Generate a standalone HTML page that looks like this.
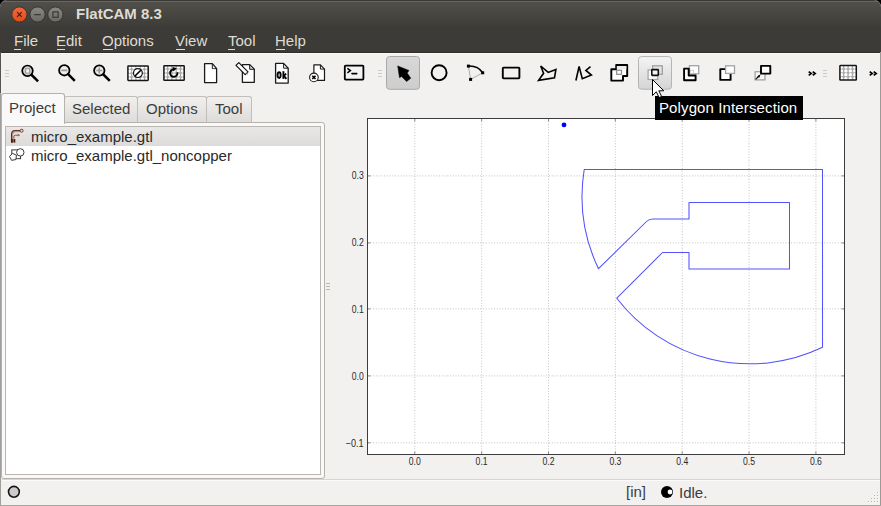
<!DOCTYPE html>
<html><head><meta charset="utf-8">
<style>
*{margin:0;padding:0;box-sizing:border-box}
html,body{width:881px;height:506px;overflow:hidden;background:#000}
body{font-family:"Liberation Sans",sans-serif;position:relative}
.a{position:absolute}
.t{position:absolute;white-space:pre;line-height:1}
#win{position:absolute;left:0;top:0;width:881px;height:506px;background:#f2f1f0;border-radius:7px 7px 0 0;overflow:hidden}
#title{left:0;top:0;width:881px;height:28px;background:linear-gradient(#3a3935 0px,#3a3935 1px,#67665f 1px,#67665f 2px,#504f4a 2px,#4c4b46 8px,#3c3b37 28px)}
#menu{left:0;top:28px;width:881px;height:24px;background:#3c3b37}
.mi{color:#dfdbd2;font-size:15px;top:33px}
.ul{position:absolute;height:1px;background:#dfdbd2;top:49px}
.tab{font-size:15px;color:#3c3c3c}
</style></head><body>
<div id="win">
 <div id="title" class="a"></div>
 <svg class="a" style="left:0;top:0" width="70" height="26" viewBox="0 0 70 26">
  <defs>
   <linearGradient id="gc" x1="0" y1="0" x2="0" y2="1"><stop offset="0" stop-color="#ef6a3e"/><stop offset="1" stop-color="#e14b1d"/></linearGradient>
   <linearGradient id="gm" x1="0" y1="0" x2="0" y2="1"><stop offset="0" stop-color="#8a8984"/><stop offset="1" stop-color="#696863"/></linearGradient>
  </defs>
  <circle cx="19.4" cy="14.5" r="7.6" fill="url(#gc)" stroke="#33322e" stroke-width="0.9"/>
  <path d="M17.1 12.2l4.6 4.6M21.7 12.2l-4.6 4.6" stroke="#3b1d12" stroke-width="1.1"/>
  <circle cx="37.5" cy="14.5" r="7.6" fill="url(#gm)" stroke="#33322e" stroke-width="0.9"/>
  <path d="M34.2 14.6h6.6" stroke="#3a3936" stroke-width="1.3"/>
  <circle cx="55.4" cy="14.5" r="7.6" fill="url(#gm)" stroke="#33322e" stroke-width="0.9"/>
  <rect x="52.9" y="11.9" width="5.2" height="5.4" fill="none" stroke="#3a3936" stroke-width="1.2"/>
 </svg>
 <div class="t" style="left:76px;top:6px;font-size:15px;font-weight:bold;color:#dfdbd2">FlatCAM 8.3</div>
 <div id="menu" class="a"></div>
 <div class="a" style="left:0;top:52px;width:881px;height:1px;background:#2f2e2b"></div>
 <div class="a" style="left:1px;top:53px;width:879px;height:1px;background:#fbfbfb"></div>
 <div class="t mi" style="left:14px">File</div>
 <div class="t mi" style="left:56px">Edit</div>
 <div class="t mi" style="left:102px">Options</div>
 <div class="t mi" style="left:175px">View</div>
 <div class="t mi" style="left:228px">Tool</div>
 <div class="t mi" style="left:275px">Help</div>
 <div class="ul" style="left:14px;width:7px"></div>
 <div class="ul" style="left:57px;width:8px"></div>
 <div class="ul" style="left:103px;width:10px"></div>
 <div class="ul" style="left:176px;width:9px"></div>
 <div class="ul" style="left:228px;width:7px"></div>
 <div class="ul" style="left:276px;width:9px"></div>
<svg class="a" style="left:0;top:0" width="881" height="100" viewBox="0 0 881 100">
 <defs>
  <linearGradient id="gAct" x1="0" y1="0" x2="0" y2="1"><stop offset="0" stop-color="#d8d8d8"/><stop offset="1" stop-color="#cdcdcd"/></linearGradient>
  <linearGradient id="gHov" x1="0" y1="0" x2="0" y2="1"><stop offset="0" stop-color="#f4f4f4"/><stop offset="1" stop-color="#d4d4d4"/></linearGradient>
 </defs>
 <g stroke="#cfccc7" stroke-width="1">
  <path d="M5 70.5h4M5 73.5h4M5 76.5h4"/>
  <path d="M378 70.5h4M378 73.5h4M378 76.5h4"/>
  <path d="M823 70.5h4M823 73.5h4M823 76.5h4"/>
 </g>
 <!-- zoom fit -->
 <circle cx="27.5" cy="70.8" r="5.3" fill="#d0d0d0" stroke="#000" stroke-width="1.7"/>
 <rect x="25.6" y="68.7" width="4" height="4.4" fill="#f4f4f4" stroke="#9b9b9b" stroke-width="1.1"/>
 <path d="M31.6 75l5.6 5.6" stroke="#000" stroke-width="2.5" stroke-linecap="square"/>
 <!-- zoom out -->
 <circle cx="64.3" cy="70.3" r="5.2" fill="#ececec" stroke="#000" stroke-width="1.8"/>
 <path d="M61.3 70.3h6" stroke="#9a9a9a" stroke-width="1.8"/>
 <path d="M68.3 74.3l5.6 5.6" stroke="#000" stroke-width="2.5" stroke-linecap="square"/>
 <!-- zoom in -->
 <circle cx="99.3" cy="70.5" r="5.2" fill="#ececec" stroke="#000" stroke-width="1.8"/>
 <path d="M96.3 70.5h6M99.3 67.5v6" stroke="#9a9a9a" stroke-width="1.6"/>
 <path d="M103.3 74.5l5.6 5.6" stroke="#000" stroke-width="2.5" stroke-linecap="square"/>
 <!-- clear plot -->
 <rect x="127.89999999999999" y="65.89999999999999" width="20.300000000000015" height="14.500000000000004" rx="0.6" fill="#a9a9a9"/>
 <circle cx="129.45" cy="67.26" r="1.7" fill="#fff"/>
 <circle cx="129.45" cy="71.19" r="1.7" fill="#fff"/>
 <circle cx="129.45" cy="75.11" r="1.7" fill="#fff"/>
 <circle cx="129.45" cy="79.04" r="1.7" fill="#fff"/>
 <circle cx="133.75" cy="67.26" r="1.7" fill="#fff"/>
 <circle cx="133.75" cy="71.19" r="1.7" fill="#fff"/>
 <circle cx="133.75" cy="75.11" r="1.7" fill="#fff"/>
 <circle cx="133.75" cy="79.04" r="1.7" fill="#fff"/>
 <circle cx="138.05" cy="67.26" r="1.7" fill="#fff"/>
 <circle cx="138.05" cy="71.19" r="1.7" fill="#fff"/>
 <circle cx="138.05" cy="75.11" r="1.7" fill="#fff"/>
 <circle cx="138.05" cy="79.04" r="1.7" fill="#fff"/>
 <circle cx="142.35" cy="67.26" r="1.7" fill="#fff"/>
 <circle cx="142.35" cy="71.19" r="1.7" fill="#fff"/>
 <circle cx="142.35" cy="75.11" r="1.7" fill="#fff"/>
 <circle cx="142.35" cy="79.04" r="1.7" fill="#fff"/>
 <circle cx="146.65" cy="67.26" r="1.7" fill="#fff"/>
 <circle cx="146.65" cy="71.19" r="1.7" fill="#fff"/>
 <circle cx="146.65" cy="75.11" r="1.7" fill="#fff"/>
 <circle cx="146.65" cy="79.04" r="1.7" fill="#fff"/>
 <rect x="127.89999999999999" y="65.89999999999999" width="20.300000000000015" height="14.500000000000004" rx="0.6" fill="none" stroke="#151515" stroke-width="1.5"/>
 <circle cx="137.9" cy="73.1" r="4.4" fill="#fff" stroke="#111" stroke-width="1.2"/>
 <path d="M135 76l5.8-5.8" stroke="#000" stroke-width="1.6"/>
 <!-- replot -->
 <rect x="163.9" y="65.69999999999999" width="20.3" height="14.600000000000012" rx="0.6" fill="#a9a9a9"/>
 <circle cx="165.45" cy="67.07" r="1.7" fill="#fff"/>
 <circle cx="165.45" cy="71.03" r="1.7" fill="#fff"/>
 <circle cx="165.45" cy="74.97" r="1.7" fill="#fff"/>
 <circle cx="165.45" cy="78.93" r="1.7" fill="#fff"/>
 <circle cx="169.75" cy="67.07" r="1.7" fill="#fff"/>
 <circle cx="169.75" cy="71.03" r="1.7" fill="#fff"/>
 <circle cx="169.75" cy="74.97" r="1.7" fill="#fff"/>
 <circle cx="169.75" cy="78.93" r="1.7" fill="#fff"/>
 <circle cx="174.05" cy="67.07" r="1.7" fill="#fff"/>
 <circle cx="174.05" cy="71.03" r="1.7" fill="#fff"/>
 <circle cx="174.05" cy="74.97" r="1.7" fill="#fff"/>
 <circle cx="174.05" cy="78.93" r="1.7" fill="#fff"/>
 <circle cx="178.35" cy="67.07" r="1.7" fill="#fff"/>
 <circle cx="178.35" cy="71.03" r="1.7" fill="#fff"/>
 <circle cx="178.35" cy="74.97" r="1.7" fill="#fff"/>
 <circle cx="178.35" cy="78.93" r="1.7" fill="#fff"/>
 <circle cx="182.65" cy="67.07" r="1.7" fill="#fff"/>
 <circle cx="182.65" cy="71.03" r="1.7" fill="#fff"/>
 <circle cx="182.65" cy="74.97" r="1.7" fill="#fff"/>
 <circle cx="182.65" cy="78.93" r="1.7" fill="#fff"/>
 <rect x="163.9" y="65.69999999999999" width="20.3" height="14.600000000000012" rx="0.6" fill="none" stroke="#151515" stroke-width="1.5"/>
 <path d="M173.9 69.4A3.7 3.7 0 1 0 177.4 72.3" fill="none" stroke="#000" stroke-width="1.9"/>
 <path d="M172.6 67.1L176.9 68.2L173.4 71.6Z" fill="#000"/>
 <!-- new doc -->
 <path d="M204.6 63.7h7.7l4.3 4.9v14h-12z" fill="#fff" stroke="#1a1a1a" stroke-width="1.3" stroke-linejoin="round"/>
 <path d="M212.3 63.7v4.9h4.3z" fill="#d0d0d0" stroke="#1a1a1a" stroke-width="1"/>
 <path d="M213 66.5l1.8 1.7h-1.8z" fill="#fff"/>
 <!-- edit doc -->
 <path d="M242.4 64.6h7.3l4.6 4.7v13h-11.9z" fill="#fff" stroke="#1a1a1a" stroke-width="1.3" stroke-linejoin="round"/>
 <path d="M249.7 64.6v4.7h4.6z" fill="#d0d0d0" stroke="#1a1a1a" stroke-width="1"/>
 <path d="M238.8 62.6L248 71.8L245.2 74.6L236 65.4Z" fill="#fff" stroke="#111" stroke-width="1.2" stroke-linejoin="round"/>
 <path d="M245.8 73.9l1.6-1.6 0.6 2.2z" fill="#888"/>
 <!-- ok doc -->
 <path d="M275.6 63.4h8l4.6 4.8v14.9h-12.6z" fill="#fff" stroke="#1a1a1a" stroke-width="1.3" stroke-linejoin="round"/>
 <path d="M283.6 63.4v4.8h4.6" fill="none" stroke="#1a1a1a" stroke-width="1"/>
 <ellipse cx="279.1" cy="75.1" rx="1.55" ry="2.85" fill="none" stroke="#000" stroke-width="1.9"/>
 <path d="M283.4 71.2v7.7" stroke="#000" stroke-width="1.9"/>
 <path d="M286.2 73.6l-2.3 2.2 2.5 3.1" fill="none" stroke="#000" stroke-width="1.8"/>
 <!-- close doc -->
 <path d="M313.9 64.8h6.5l4.1 4.3v11.3h-10.6z" fill="#fff" stroke="#1a1a1a" stroke-width="1.2" stroke-linejoin="round"/>
 <path d="M320.4 64.8v4.3h4.1" fill="none" stroke="#1a1a1a" stroke-width="1"/>
 <circle cx="313.9" cy="77.4" r="4.3" fill="#fff" stroke="#1a1a1a" stroke-width="1.1"/>
 <path d="M312.3 75.8l3.2 3.2M315.5 75.8l-3.2 3.2" stroke="#000" stroke-width="1.6"/>
 <!-- terminal -->
 <rect x="344.8" y="65.7" width="18.6" height="13.9" rx="0.8" fill="#f3f3f3" stroke="#000" stroke-width="1.8"/>
 <path d="M347.4 68.4l3 2.2-3 2.2" fill="none" stroke="#000" stroke-width="1.5"/>
 <path d="M352 73.6h4.8" stroke="#000" stroke-width="1.6" stroke-linecap="round"/>
 <!-- active select button -->
 <rect x="386.5" y="56.5" width="33" height="32.8" rx="3" fill="url(#gAct)" stroke="#a9a9a9" stroke-width="1"/>
 <path d="M397.7 65.9L409 70.5L407.2 73.1L410.8 78.2L406.6 81.6L401.5 76.4L399.5 77.7Z" fill="#000" stroke="#000" stroke-width="0.5" stroke-linejoin="round"/>
 <!-- circle -->
 <circle cx="439.1" cy="72.7" r="7.5" fill="none" stroke="#000" stroke-width="1.9"/>
 <!-- arc -->
 <path d="M470.6 79.4L468.4 66M470.6 79.4L482.7 72.8" stroke="#999" stroke-width="0.8" fill="none"/>
 <path d="M468.4 66Q478 65.5 482.7 72.8" stroke="#000" stroke-width="1.6" fill="none"/>
 <rect x="466.9" y="64.6" width="3" height="3" fill="#000"/>
 <rect x="481.2" y="71.3" width="3" height="3" fill="#000"/>
 <rect x="469.1" y="77.9" width="3" height="3" fill="#000"/>
 <!-- rect -->
 <rect x="502.8" y="67.6" width="16.6" height="10.8" rx="0.8" fill="none" stroke="#000" stroke-width="1.9"/>
 <!-- polygon -->
 <path d="M540.7 66L548.2 72.4L555.9 69.4L554.5 77.8L538.6 80.4L543.6 73.3Z" fill="none" stroke="#000" stroke-width="1.6" stroke-linejoin="miter"/>
 <!-- path -->
 <path d="M575.9 80.5L579.1 66.5L582.3 78.7L591.4 75.1L585.9 70.4L590.5 66.7" fill="none" stroke="#000" stroke-width="1.6" stroke-linejoin="miter"/>
 <!-- union -->
 <path d="M611.3 69.2h4.9v-4.2h11v11h-4.2v4.6h-11.7z" fill="#fff" stroke="#000" stroke-width="1.9" stroke-linejoin="round"/>
 <path d="M616.8 66.2h9.6v3h-9.6z" fill="#ececec"/>
 <rect x="616.7" y="70.3" width="4.8" height="4" fill="#fff" stroke="#8c8c8c" stroke-width="1.2"/>
 <!-- hover button -->
 <rect x="638.5" y="56.6" width="33" height="32.6" rx="3" fill="url(#gHov)" stroke="#b4b4b4" stroke-width="1"/>
 <rect x="652.6" y="65.8" width="9.7" height="8.5" fill="#e2e2e2" stroke="#9c9c9c" stroke-width="1.2"/>
 <rect x="648.1" y="69.9" width="9.7" height="9.6" fill="#fafafa" stroke="#a4a4a4" stroke-width="1.2"/>
 <rect x="651.8" y="69.6" width="6.5" height="5.8" rx="0.6" fill="#f4f4f4" stroke="#111" stroke-width="1.6"/>
 <!-- subtract -->
 <rect x="689.5" y="65.7" width="9.2" height="8.1" fill="#fff" stroke="#a3a3a3" stroke-width="1.3"/>
 <rect x="690.3" y="70.2" width="3.3" height="3.4" fill="none" stroke="#c9c9c9" stroke-width="0.9"/>
 <path d="M684.1 68.6h4.6v6.9h6.9v4.7h-11.5z" fill="#fff" stroke="#000" stroke-width="1.9" stroke-linejoin="round"/>
 <!-- 727 -->
 <rect x="720.3" y="69.1" width="10.3" height="10.8" fill="#fff" stroke="#000" stroke-width="1.9" stroke-linejoin="round"/>
 <rect x="725.6" y="65.8" width="8.9" height="7.6" fill="#fff" stroke="#a3a3a3" stroke-width="1.3"/>
 <!-- 763 -->
 <rect x="755.1" y="71.7" width="9.9" height="8.2" fill="#f7f7f7" stroke="#a3a3a3" stroke-width="1.3"/>
 <rect x="761" y="65.9" width="9.3" height="7.7" fill="#fff" stroke="#000" stroke-width="1.9" stroke-linejoin="round"/>
 <path d="M755.6 79.4l3.6-3.6" stroke="#000" stroke-width="1.1"/>
 <path d="M757.2 76.3L760.7 74.3L759.1 77.9Z" fill="#000"/>
 <!-- chevrons -->
 <path d="M808.7 71.6l2.5 1.9-2.5 1.9M812.7 71.6l2.5 1.9-2.5 1.9" fill="none" stroke="#000" stroke-width="1.7"/>
 <path d="M869.7 71.6l2.5 1.9-2.5 1.9M873.7 71.6l2.5 1.9-2.5 1.9" fill="none" stroke="#000" stroke-width="1.7"/>
 <!-- grid -->
 <rect x="839.9" y="65.6" width="16.400000000000023" height="14.500000000000004" rx="0.6" fill="#a9a9a9"/>
 <circle cx="841.50" cy="66.96" r="1.7" fill="#fff"/>
 <circle cx="841.50" cy="70.89" r="1.7" fill="#fff"/>
 <circle cx="841.50" cy="74.81" r="1.7" fill="#fff"/>
 <circle cx="841.50" cy="78.74" r="1.7" fill="#fff"/>
 <circle cx="845.90" cy="66.96" r="1.7" fill="#fff"/>
 <circle cx="845.90" cy="70.89" r="1.7" fill="#fff"/>
 <circle cx="845.90" cy="74.81" r="1.7" fill="#fff"/>
 <circle cx="845.90" cy="78.74" r="1.7" fill="#fff"/>
 <circle cx="850.30" cy="66.96" r="1.7" fill="#fff"/>
 <circle cx="850.30" cy="70.89" r="1.7" fill="#fff"/>
 <circle cx="850.30" cy="74.81" r="1.7" fill="#fff"/>
 <circle cx="850.30" cy="78.74" r="1.7" fill="#fff"/>
 <circle cx="854.70" cy="66.96" r="1.7" fill="#fff"/>
 <circle cx="854.70" cy="70.89" r="1.7" fill="#fff"/>
 <circle cx="854.70" cy="74.81" r="1.7" fill="#fff"/>
 <circle cx="854.70" cy="78.74" r="1.7" fill="#fff"/>
 <rect x="839.9" y="65.6" width="16.400000000000023" height="14.500000000000004" rx="0.6" fill="none" stroke="#151515" stroke-width="1.5"/>
</svg>
 <!-- tabs -->
 <div class="a" style="left:64px;top:96px;width:74px;height:27px;border:1px solid #c2bfba;border-bottom:none;border-radius:3px 3px 0 0;background:linear-gradient(#f1f0ee,#dcdbd9)"></div>
 <div class="a" style="left:137px;top:96px;width:70px;height:27px;border:1px solid #c2bfba;border-bottom:none;border-radius:3px 3px 0 0;background:linear-gradient(#f1f0ee,#dcdbd9)"></div>
 <div class="a" style="left:206px;top:96px;width:46px;height:27px;border:1px solid #c2bfba;border-bottom:none;border-radius:3px 3px 0 0;background:linear-gradient(#f1f0ee,#dcdbd9)"></div>
 <!-- pane -->
 <div class="a" style="left:1px;top:122px;width:324px;height:357px;border:1px solid #b5b2ad;border-radius:0 3px 3px 3px;background:#f9f9f9"></div>
 <div class="a" style="left:1px;top:93px;width:64px;height:31px;border:1px solid #b5b2ad;border-bottom:none;border-radius:3px 3px 0 0;background:#f9f9f9"></div>
 <!-- list box -->
 <div class="a" style="left:5px;top:126px;width:316px;height:349px;border:1px solid #bab7b2;background:#fff"></div>
 <div class="a" style="left:6px;top:127px;width:314px;height:19px;background:linear-gradient(#e9e8e6,#dcdbd9)"></div>
 <div class="t tab" style="left:9px;top:100px">Project</div>
 <div class="t tab" style="left:72px;top:101px">Selected</div>
 <div class="t tab" style="left:146px;top:101px">Options</div>
 <div class="t tab" style="left:215px;top:101px">Tool</div>
 <div class="t" style="left:31px;top:129px;font-size:15px;color:#2a2a2a">micro_example.gtl</div>
 <div class="t" style="left:31px;top:148px;font-size:15px;color:#2a2a2a">micro_example.gtl_noncopper</div>
 <svg class="a" style="left:0;top:120px" width="40" height="50" viewBox="0 120 40 50">
  <path d="M11.6 142.6V134.2Q11.6 130.6 15.2 130.6H20.3" fill="none" stroke="#5b2b20" stroke-width="1.3"/>
  <path d="M12.6 142.6V135Q12.6 131.8 15.6 131.8H20" fill="none" stroke="#b88a7d" stroke-width="1.1"/>
  <path d="M13.9 138.5V136.6Q13.9 135.2 15.4 135.2H19.4" fill="none" stroke="#7a4537" stroke-width="1"/>
  <path d="M17.8 134l1.8 1.2-1.8 0.9" fill="none" stroke="#9a6a5d" stroke-width="0.8"/>
  <circle cx="21.6" cy="130.7" r="1.5" fill="#f3ddd2" stroke="#6b3324" stroke-width="1"/>
  <rect x="11" y="139" width="1.9" height="3.6" fill="#4b1e14"/>
  <rect x="13.4" y="139" width="1.9" height="3.6" fill="#4b1e14"/>
  <g fill="none" stroke="#2e2e2e" stroke-width="0.95">
   <rect x="11.8" y="149.9" width="8.8" height="8.8" fill="#fff"/>
   <circle cx="20.3" cy="152.4" r="3.7" fill="#fff"/>
   <path d="M12.56 153.36 L16.47 155.26 L15.86 159.57 L11.58 160.33 L9.54 156.49Z" fill="#fff"/>
  </g>
 </svg>
 <!-- splitter -->
 <div class="a" style="left:326px;top:283px;width:4px;height:1px;background:#bbb8b3"></div>
 <div class="a" style="left:326px;top:286px;width:4px;height:1px;background:#bbb8b3"></div>
 <div class="a" style="left:326px;top:289px;width:4px;height:1px;background:#bbb8b3"></div>
 <!-- status bar -->
 <div class="a" style="left:2px;top:479px;width:878px;height:1px;background:#d8d6d1"></div>
 <div class="a" style="left:2px;top:480px;width:878px;height:1px;background:#fbfbfb"></div>
 <svg class="a" style="left:4px;top:482px" width="20" height="20" viewBox="4 482 20 20"><circle cx="13.9" cy="491.8" r="5.4" fill="#cbcbcb" stroke="#141414" stroke-width="1.6"/></svg>
 <div class="t" style="left:626px;top:484px;font-size:15px;color:#3c3c3c">[in]</div>
 <svg class="a" style="left:658px;top:484px" width="18" height="18" viewBox="658 484 18 18">
  <circle cx="667" cy="492" r="6" fill="#000"/>
  <circle cx="670" cy="492" r="2.4" fill="#fff"/>
 </svg>
 <div class="t" style="left:679px;top:485px;font-size:15px;color:#3c3c3c">Idle.</div>
 <svg class="a" style="left:866px;top:490px" width="14" height="14" viewBox="866 490 14 14"><rect x="878" y="493" width="1" height="1" fill="#fdfdfd"/><rect x="875" y="496" width="1" height="1" fill="#fdfdfd"/><rect x="878" y="496" width="1" height="1" fill="#fdfdfd"/><rect x="872" y="499" width="1" height="1" fill="#fdfdfd"/><rect x="875" y="499" width="1" height="1" fill="#fdfdfd"/><rect x="878" y="499" width="1" height="1" fill="#fdfdfd"/><rect x="869" y="502" width="1" height="1" fill="#fdfdfd"/><rect x="872" y="502" width="1" height="1" fill="#fdfdfd"/><rect x="875" y="502" width="1" height="1" fill="#fdfdfd"/><rect x="878" y="502" width="1" height="1" fill="#fdfdfd"/><rect x="877" y="492" width="1" height="1" fill="#b9b6b1"/><rect x="874" y="495" width="1" height="1" fill="#b9b6b1"/><rect x="877" y="495" width="1" height="1" fill="#b9b6b1"/><rect x="871" y="498" width="1" height="1" fill="#b9b6b1"/><rect x="874" y="498" width="1" height="1" fill="#b9b6b1"/><rect x="877" y="498" width="1" height="1" fill="#b9b6b1"/><rect x="868" y="501" width="1" height="1" fill="#b9b6b1"/><rect x="871" y="501" width="1" height="1" fill="#b9b6b1"/><rect x="874" y="501" width="1" height="1" fill="#b9b6b1"/><rect x="877" y="501" width="1" height="1" fill="#b9b6b1"/></svg>
<svg class="a" style="left:0;top:0" width="881" height="506" viewBox="0 0 881 506">
 <rect x="367.5" y="118.5" width="477.0" height="336.0" fill="#fff"/>
 <path d="M414.80 118.5V454.5M481.65 118.5V454.5M548.50 118.5V454.5M615.35 118.5V454.5M682.20 118.5V454.5M749.05 118.5V454.5M815.90 118.5V454.5M367.5 442.80H844.5M367.5 375.90H844.5M367.5 308.90H844.5M367.5 242.90H844.5M367.5 175.90H844.5" stroke="#c2c2c2" stroke-width="1" stroke-dasharray="1 1.75" fill="none"/>
 <path d="M414.80 118.5v3M414.80 454.5v-3M481.65 118.5v3M481.65 454.5v-3M548.50 118.5v3M548.50 454.5v-3M615.35 118.5v3M615.35 454.5v-3M682.20 118.5v3M682.20 454.5v-3M749.05 118.5v3M749.05 454.5v-3M815.90 118.5v3M815.90 454.5v-3M367.5 442.80h3M844.5 442.80h-3M367.5 375.90h3M844.5 375.90h-3M367.5 308.90h3M844.5 308.90h-3M367.5 242.90h3M844.5 242.90h-3M367.5 175.90h3M844.5 175.90h-3" stroke="#8a8a8a" stroke-width="1" fill="none"/>
 <rect x="367.5" y="118.5" width="477.0" height="336.0" fill="none" stroke="#3c3c3c" stroke-width="1"/>
 <path d="M584.2 169.5H822.5V347.3A167.8 167.8 0 0 1 616.8 298.2L662.5 252.5H689V269H789.5V202.5H689V219H653Q649 219 646.5 221.5L598.5 268.7A167.8 167.8 0 0 1 584.2 169.5Z" fill="none" stroke="#5252ff" stroke-width="1.05" stroke-linejoin="round"/>
 <circle cx="564" cy="124.9" r="2.4" fill="#0000ff"/>
 <text x="414.8" y="465" text-anchor="middle" font-family="Liberation Sans" font-size="10" fill="#2a2a2a" textLength="12" lengthAdjust="spacingAndGlyphs">0.0</text>
 <text x="481.6" y="465" text-anchor="middle" font-family="Liberation Sans" font-size="10" fill="#2a2a2a" textLength="12" lengthAdjust="spacingAndGlyphs">0.1</text>
 <text x="548.5" y="465" text-anchor="middle" font-family="Liberation Sans" font-size="10" fill="#2a2a2a" textLength="12" lengthAdjust="spacingAndGlyphs">0.2</text>
 <text x="615.4" y="465" text-anchor="middle" font-family="Liberation Sans" font-size="10" fill="#2a2a2a" textLength="12" lengthAdjust="spacingAndGlyphs">0.3</text>
 <text x="682.2" y="465" text-anchor="middle" font-family="Liberation Sans" font-size="10" fill="#2a2a2a" textLength="12" lengthAdjust="spacingAndGlyphs">0.4</text>
 <text x="749.0" y="465" text-anchor="middle" font-family="Liberation Sans" font-size="10" fill="#2a2a2a" textLength="12" lengthAdjust="spacingAndGlyphs">0.5</text>
 <text x="815.9" y="465" text-anchor="middle" font-family="Liberation Sans" font-size="10" fill="#2a2a2a" textLength="12" lengthAdjust="spacingAndGlyphs">0.6</text>
 <text x="363.7" y="446.8" text-anchor="end" font-family="Liberation Sans" font-size="10" fill="#2a2a2a" textLength="18" lengthAdjust="spacingAndGlyphs">−0.1</text>
 <text x="363.7" y="379.8" text-anchor="end" font-family="Liberation Sans" font-size="10" fill="#2a2a2a" textLength="12" lengthAdjust="spacingAndGlyphs">0.0</text>
 <text x="363.7" y="312.8" text-anchor="end" font-family="Liberation Sans" font-size="10" fill="#2a2a2a" textLength="12" lengthAdjust="spacingAndGlyphs">0.1</text>
 <text x="363.7" y="245.8" text-anchor="end" font-family="Liberation Sans" font-size="10" fill="#2a2a2a" textLength="12" lengthAdjust="spacingAndGlyphs">0.2</text>
 <text x="363.7" y="178.9" text-anchor="end" font-family="Liberation Sans" font-size="10" fill="#2a2a2a" textLength="12" lengthAdjust="spacingAndGlyphs">0.3</text>
</svg> <!-- tooltip -->
 <div class="a" style="left:655px;top:96px;width:148px;height:24px;background:#000"></div>
 <div class="t" style="left:659px;top:100px;font-size:15px;color:#fff;letter-spacing:0.12px">Polygon Intersection</div>
 <!-- cursor -->
 <svg class="a" style="left:645px;top:75px" width="25" height="25" viewBox="645 75 25 25">
  <path d="M652.5 79.5V95.5L656.3 91.8L659.2 97.6L661.6 96.4L658.8 90.8H663.8Z" fill="#fff" stroke="#000" stroke-width="1" stroke-linejoin="miter"/>
 </svg>
 <div class="a" style="left:0;top:52px;width:1px;height:41px;background:#55544f"></div>
 <div class="a" style="left:0;top:93px;width:1px;height:413px;background:#a09e9a"></div>
 <div class="a" style="left:880px;top:52px;width:1px;height:454px;background:#9c9a96"></div>
 <div class="a" style="left:0;top:505px;width:881px;height:1px;background:#a9a7a3"></div>
</div>
</body></html>
